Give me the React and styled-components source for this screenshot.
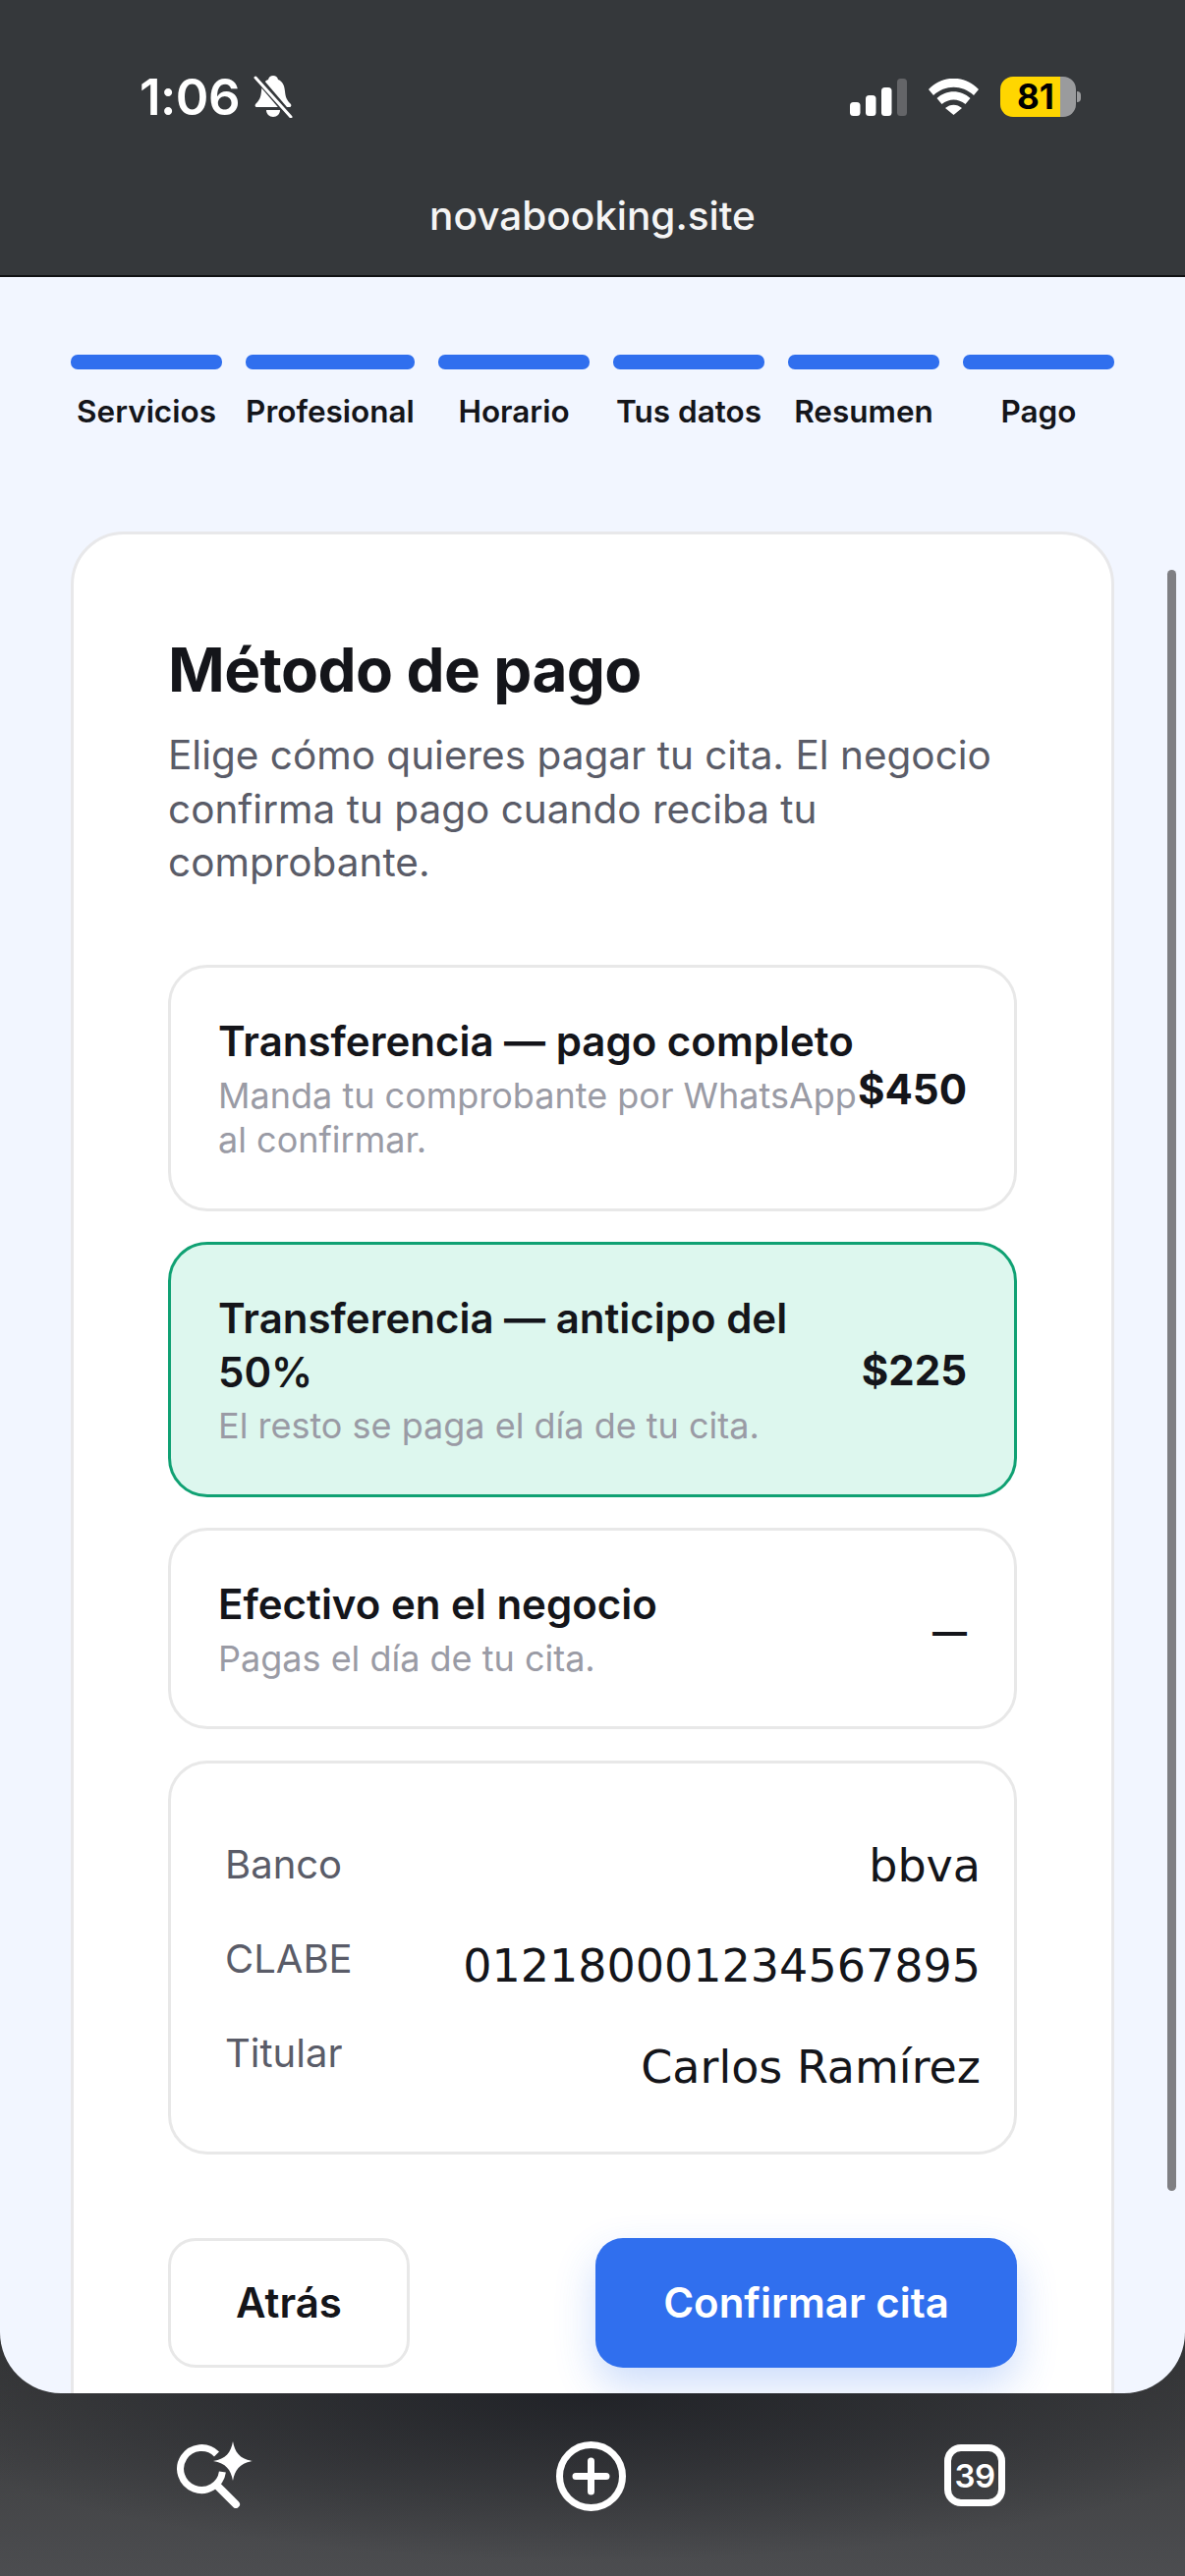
import React from 'react';
import styled, { createGlobalStyle } from 'styled-components';

const Global = createGlobalStyle`
  html, body { margin: 0; padding: 0; background: #35383b; }
  * { box-sizing: border-box; }
`;

const Phone = styled.div`
  width: 1206px; height: 2622px; display: flex; flex-direction: column;
  overflow: hidden; font-family: Inter, "Liberation Sans", sans-serif;
  background:
    radial-gradient(ellipse 720px 170px at 50% 2436px, rgba(24,26,32,.75), rgba(24,26,32,0)),
    linear-gradient(180deg, #353637 2370px, #4c4d50 2622px);
`;
const TopBar = styled.header`
  height: 282px; flex: none; background: #35383b; border-bottom: 2px solid #111214;
  display: flex; flex-direction: column; color: #fff;
`;
const StatusRow = styled.div`
  display: flex; justify-content: space-between; align-items: center;
  padding: 71px 106px 0 142px; height: 126px;
`;
const TimeGroup = styled.div`display: flex; align-items: center; gap: 14px;`;
const Time = styled.span`font-size: 51px; font-weight: 600; letter-spacing: -0.5px; line-height: 55px;`;
const StatusIcons = styled.div`display: flex; align-items: center; gap: 22px;`;
const Battery = styled.div`
  width: 77px; height: 41px; border-radius: 13px; overflow: hidden;
  background: linear-gradient(90deg, #ffd600 0 61px, #9a9b9d 61px);
  color: #000; font-size: 35px; font-weight: 700; line-height: 41px;
  padding-left: 17px;
`;
const BatteryGroup = styled.div`display: flex; align-items: center; gap: 1px;`;
const BatteryTip = styled.div`width: 4px; height: 11px; border-radius: 0 4px 4px 0; background: #9a9b9d;`;
const Domain = styled.div`
  text-align: center; font-size: 40.5px; font-weight: 500; line-height: 46px; margin-top: 71px;
  color: #f5f5f5;
`;

const Sheet = styled.main`
  position: relative; height: 2154px; flex: none; background: #f2f6ff; overflow: hidden;
  border-radius: 0 0 62px 62px; padding: 79px 72px 0;
`;
const Steps = styled.div`display: flex; gap: 24px; justify-content: space-between;`;
const Step = styled.div`display: flex; flex-direction: column; align-items: center; flex: ${p => p.$w}px 0 0;`;
const StepBar = styled.div`width: 100%; height: 15px; border-radius: 7px; background: #306fee;`;
const StepLabel = styled.div`
  font-size: 31.5px; font-weight: 600; color: #14151a; margin-top: 23px; line-height: 40px; white-space: nowrap;
`;
const Card = styled.section`
  margin-top: 102px; background: #fff; border: 3px solid #e8e8ea; border-radius: 54px;
  padding: 100px 96px 200px;
`;
const Title = styled.h1`
  margin: 0; font-size: 62px; font-weight: 700; color: #14151a; line-height: 76px; letter-spacing: -0.6px;
`;
const Lead = styled.p`
  margin: 22px 0 0; font-size: 40.5px; line-height: 54.5px; color: #5a5c68;
`;
const Options = styled.div`display: flex; flex-direction: column; gap: 31.5px; margin-top: 76.5px;`;
const Option = styled.div`
  display: flex; align-items: center; justify-content: space-between;
  border: ${p => p.$on ? '3px solid #10a173' : '3px solid #e8e8e8'};
  background: ${p => p.$on ? '#ddf7ee' : '#fff'};
  border-radius: 40px; padding: 48px 48px 46px;
`;
const OptionText = styled.div`flex: 1 1 auto; min-width: 0;`;
const OptionTitle = styled.div`font-size: 42px; font-weight: 600; color: #14151a; line-height: 54.6px;`;
const OptionSub = styled.div`font-size: 36px; color: #9a9ba5; line-height: 45.5px; margin-top: 5px;`;
const Price = styled.div`
  font-size: ${p => p.$dash ? 35 : 42}px; font-weight: 700; color: #14151a; white-space: nowrap; flex: none;
  padding-top: ${p => p.$dash ? 3 : 0}px;
`;
const Bank = styled.div`
  border: 3px solid #e8e8e8; border-radius: 40px; padding: 68px 34px 54px 55px; background: #fff;
  display: flex; justify-content: space-between; align-items: flex-start;
`;
const BankKeys = styled.div`display: flex; flex-direction: column; gap: 42px; margin-top: 8.5px;`;
const BankVals = styled.div`display: flex; flex-direction: column; gap: 38.5px; margin-top: 4px; text-align: right;`;
const BankKey = styled.span`font-size: 40px; color: #5a5c68; line-height: 54px;`;
const BankVal = styled.span`font-family: "DejaVu Sans", sans-serif; font-size: 46px; color: #14151a; line-height: 64px;`;
const Actions = styled.div`display: flex; justify-content: space-between; margin-top: 85px;`;
const BackBtn = styled.button`
  width: 246px; height: 132px; background: #fff; border: 3px solid #e8e8e8; border-radius: 28px;
  font: 600 42px Inter, sans-serif; color: #14151a; padding: 0;
`;
const ConfirmBtn = styled.button`
  width: 429px; height: 132px; background: #306fee; border: none; border-radius: 28px; padding: 0;
  font: 600 42px Inter, sans-serif; color: #fff; box-shadow: 0 18px 42px rgba(48,111,238,.24);
`;
const Scrollbar = styled.div`
  position: absolute; right: 9px; top: 298px; width: 9px; height: 1650px; border-radius: 5px; background: #7f7f83;
`;
const BottomBar = styled.nav`
  flex: 1; display: grid; grid-template-columns: 1fr auto 1fr; align-items: start;
  padding: 49px 183px 0 180px;
`;
const TabsSlot = styled.div`display: flex; justify-content: flex-end;`;
const Tabs = styled.div`
  width: 62px; height: 63px; border: 7px solid #fff; border-radius: 17px; color: #fff;
  display: flex; align-items: center; justify-content: center; font-size: 33px; font-weight: 600;
  margin-top: 3px; letter-spacing: -0.5px;
`;

const Bell = () => (
  <svg width="40" height="43" viewBox="0 0 40 43" fill="#fff">
    <path d="M20 0c2.500 0 4.500 1.500 5 4 5 2 6.500 6.500 7 12 .5 6 2 9 5.500 12.500 1.500 1.500 1 3.500-1 3.500H3.500c-2 0-2.500-2-1-3.500C6 25 7.500 22 8 16c.5-5.500 2-10 7-12 .5-2.500 2.500-4 5-4z"/>
    <path d="M13 35h14c0 4-3 7-7 7s-7-3-7-7z"/>
    <path d="M2 0l36 42" stroke="#35383b" strokeWidth="7"/>
    <path d="M2 2l36 40" stroke="#fff" strokeWidth="3" strokeLinecap="round"/>
  </svg>
);
const Signal = () => (
  <svg width="58" height="38" viewBox="0 0 58 38">
    <rect x="0" y="24" width="10.500" height="14" rx="3.500" fill="#fff"/>
    <rect x="16" y="17" width="10.500" height="21" rx="3.500" fill="#fff"/>
    <rect x="32" y="9" width="10.500" height="29" rx="3.500" fill="#fff"/>
    <rect x="48" y="0" width="10" height="38" rx="3.500" fill="#646568"/>
  </svg>
);
const Wifi = () => (
  <svg width="51" height="37" viewBox="0 0 51 37" fill="#fff">
    <path d="M0 11C14-4 37-4 51 11l-5 6C34 6 17 6 5 17z"/>
    <path d="M8.500 20C18 11 33 11 42.500 20l-5 6C30 20 21 20 13.500 26z"/>
    <path d="M17 30c5-4.500 12-4.500 17 0l-8.500 7z"/>
  </svg>
);
const SearchSpark = () => (
  <svg width="77" height="68" viewBox="0 0 77 68" fill="none">
    <path d="M40.500 13A21.500 21.500 0 1 0 46.400 31" stroke="#fff" strokeWidth="7"/>
    <path d="M42 46l18 18" stroke="#fff" strokeWidth="8" strokeLinecap="round"/>
    <path d="M57 0c2 11 7 18 20 20-13 2-18 9-20 20-2-11-7-18-20-20 13-2 18-9 20-20z" fill="#fff"/>
  </svg>
);
const PlusCircle = () => (
  <svg width="71" height="71" viewBox="0 0 71 71" fill="none" stroke="#fff">
    <circle cx="35.500" cy="35.500" r="32" strokeWidth="7"/>
    <path d="M35.500 20v31M20 35.500h31" strokeWidth="7" strokeLinecap="round"/>
  </svg>
);

const steps = [['Servicios',154],['Profesional',172],['Horario',154],['Tus datos',154],['Resumen',154],['Pago',154]];
const bank = [['Banco','bbva'],['CLABE','012180001234567895'],['Titular','Carlos Ramírez']];

export default function App() {
  return (
    <Phone>
      <Global />
      <TopBar>
        <StatusRow>
          <TimeGroup><Time>1:06</Time><Bell /></TimeGroup>
          <StatusIcons>
            <Signal /><Wifi />
            <BatteryGroup><Battery>81</Battery><BatteryTip /></BatteryGroup>
          </StatusIcons>
        </StatusRow>
        <Domain>novabooking.site</Domain>
      </TopBar>
      <Sheet>
        <Steps>
          {steps.map(([l, w]) => <Step key={l} $w={w}><StepBar /><StepLabel>{l}</StepLabel></Step>)}
        </Steps>
        <Card>
          <Title>Método de pago</Title>
          <Lead>Elige cómo quieres pagar tu cita. El negocio confirma tu pago cuando reciba tu comprobante.</Lead>
          <Options>
            <Option>
              <OptionText>
                <OptionTitle>Transferencia — pago completo</OptionTitle>
                <OptionSub>Manda tu comprobante por WhatsApp al confirmar.</OptionSub>
              </OptionText>
              <Price>$450</Price>
            </Option>
            <Option $on>
              <OptionText>
                <OptionTitle>Transferencia — anticipo del 50%</OptionTitle>
                <OptionSub>El resto se paga el día de tu cita.</OptionSub>
              </OptionText>
              <Price>$225</Price>
            </Option>
            <Option>
              <OptionText>
                <OptionTitle>Efectivo en el negocio</OptionTitle>
                <OptionSub>Pagas el día de tu cita.</OptionSub>
              </OptionText>
              <Price $dash>—</Price>
            </Option>
            <Bank>
              <BankKeys>{bank.map(([k]) => <BankKey key={k}>{k}</BankKey>)}</BankKeys>
              <BankVals>{bank.map(([k, v]) => <BankVal key={k}>{v}</BankVal>)}</BankVals>
            </Bank>
          </Options>
          <Actions>
            <BackBtn>Atrás</BackBtn>
            <ConfirmBtn>Confirmar cita</ConfirmBtn>
          </Actions>
        </Card>
        <Scrollbar />
      </Sheet>
      <BottomBar>
        <SearchSpark /><PlusCircle /><TabsSlot><Tabs>39</Tabs></TabsSlot>
      </BottomBar>
    </Phone>
  );
}
